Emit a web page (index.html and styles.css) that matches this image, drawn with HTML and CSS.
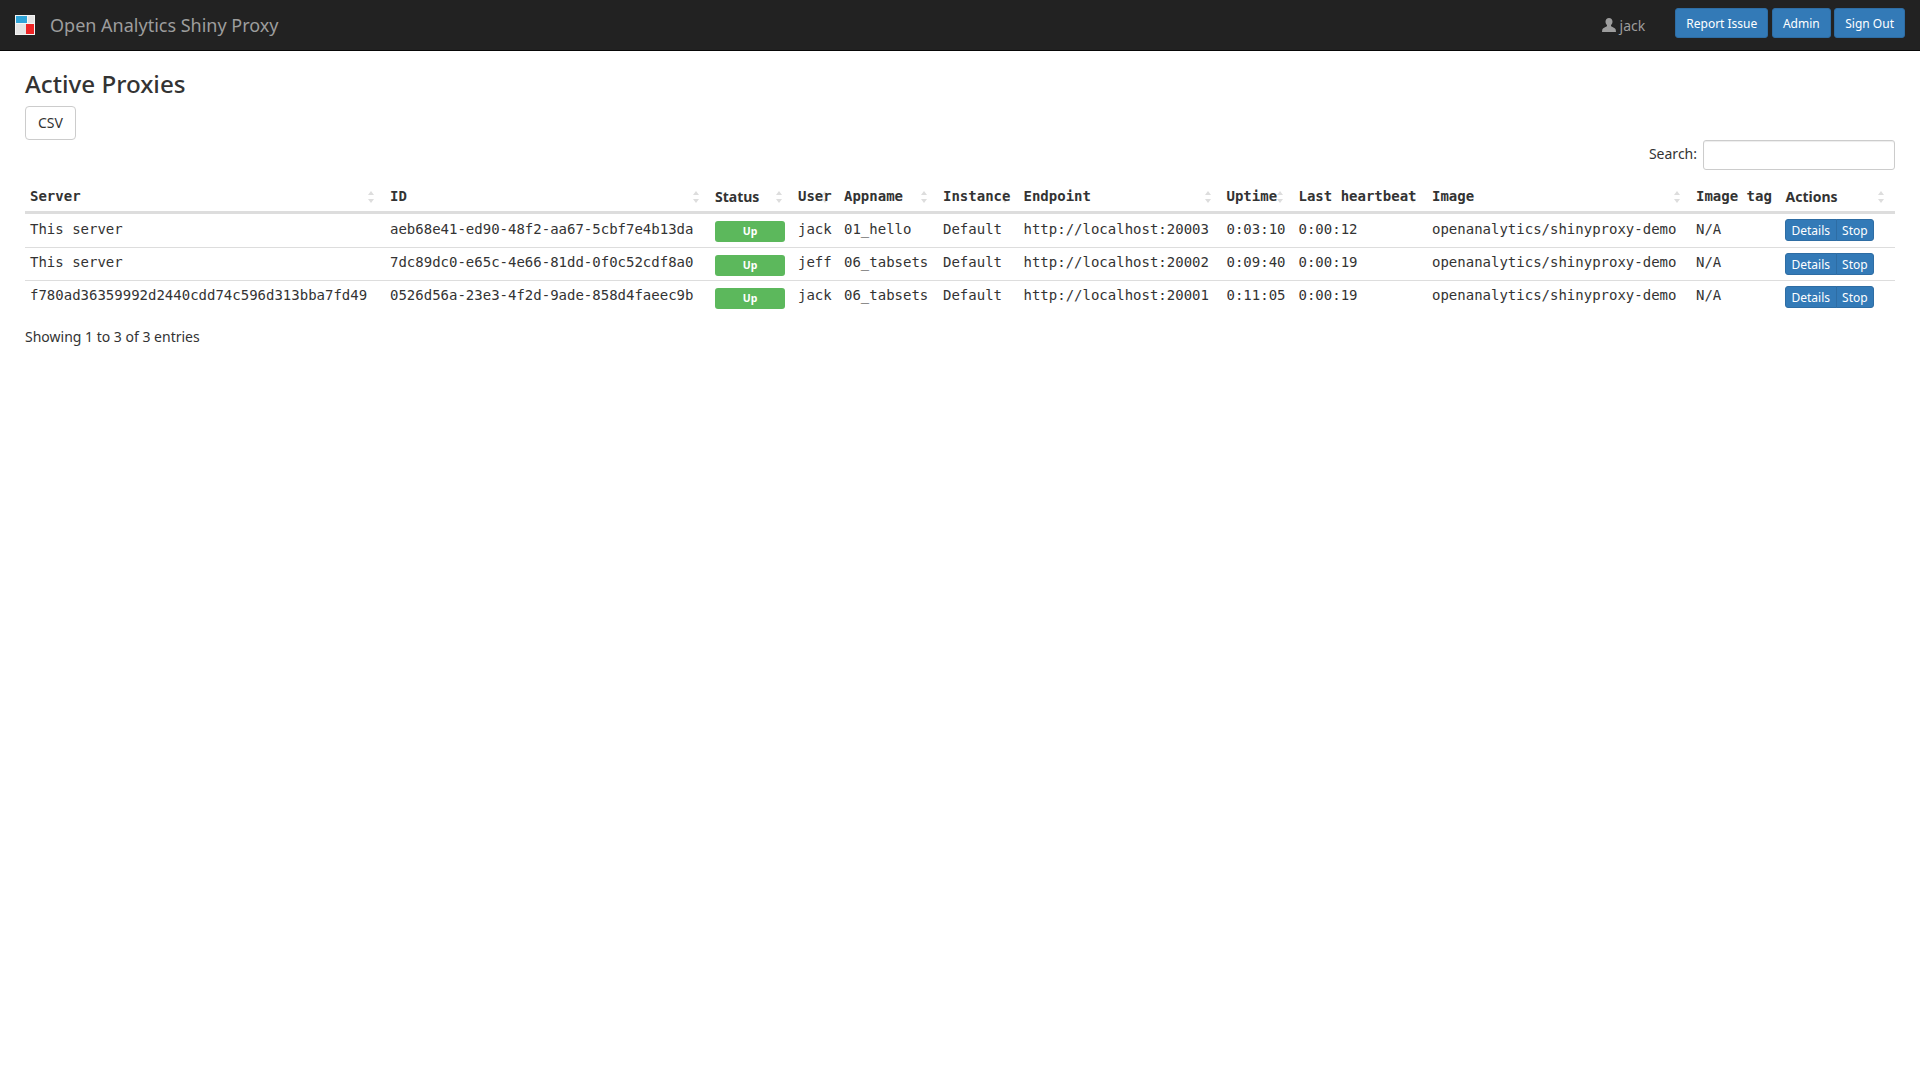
FILE: index.html
```html
<!DOCTYPE html>
<html lang="en">
<head>
<meta charset="utf-8">
<title>Open Analytics Shiny Proxy</title>
<link rel="stylesheet" href="styles.css">
</head>
<body>
<nav class="navbar">
  <div class="brand">
    <svg class="logo" width="20" height="20" viewBox="0 0 20 20" aria-hidden="true">
      <rect width="20" height="20" fill="#f4f4f4"/>
      <rect x="1" y="1" width="11" height="7" fill="#2fa4d8"/>
      <rect x="13" y="1" width="6" height="7" fill="#e4e4e4"/>
      <rect x="1" y="9" width="10" height="10" fill="#e4e4e4"/>
      <rect x="11" y="9" width="8" height="10" fill="#ee2425"/>
    </svg>
    <span class="brand-name">Open Analytics Shiny Proxy</span>
  </div>
  <div class="nav-right">
    <span class="user">
      <svg class="user-icon" width="14" height="14" viewBox="0 0 14 14" aria-hidden="true">
        <path d="M7 0C4.900 0 3.500 1.500 3.500 3.600c0 1.400.5 2.600 1.400 3.400.3.500.2 1.100-.3 1.400C3.300 9.200.7 9.700.3 11.500L0 14h14l-.3-2.500c-.4-1.800-3-2.300-4.300-3.100-.5-.3-.6-.9-.3-1.400.9-.8 1.400-2 1.400-3.400C10.500 1.500 9.100 0 7 0z" fill="#9d9d9d"/>
      </svg>
      jack
    </span>
    <div class="nav-buttons">
      <a class="btn btn-primary btn-sm">Report Issue</a>
      <a class="btn btn-primary btn-sm">Admin</a>
      <a class="btn btn-primary btn-sm">Sign Out</a>
    </div>
  </div>
</nav>
<main class="content">
  <h2 class="title">Active Proxies</h2>
  <a class="btn btn-default">CSV</a>
  <div class="filter">
    <label class="filter-label" for="search">Search:</label>
    <input class="filter-input" id="search" type="search">
  </div>
  <table class="proxies">
    <colgroup>
      <col class="c-server"><col class="c-id"><col class="c-status"><col class="c-user"><col class="c-app"><col class="c-inst"><col class="c-end"><col class="c-up"><col class="c-beat"><col class="c-img"><col class="c-tag"><col class="c-act">
    </colgroup>
    <thead>
      <tr>
        <th class="sort">Server</th>
        <th class="sort">ID</th>
        <th class="sort sans">Status</th>
        <th class="sort">User</th>
        <th class="sort">Appname</th>
        <th class="sort">Instance</th>
        <th class="sort">Endpoint</th>
        <th class="sort">Uptime</th>
        <th class="sort">Last heartbeat</th>
        <th class="sort">Image</th>
        <th class="sort">Image tag</th>
        <th class="sort sans">Actions</th>
      </tr>
    </thead>
    <tbody>
      <tr>
        <td>This server</td>
        <td>aeb68e41-ed90-48f2-aa67-5cbf7e4b13da</td>
        <td class="cell-widget"><span class="label">Up</span></td>
        <td>jack</td>
        <td>01_hello</td>
        <td>Default</td>
        <td>http://localhost:20003</td>
        <td>0:03:10</td>
        <td>0:00:12</td>
        <td>openanalytics/shinyproxy-demo</td>
        <td>N/A</td>
        <td class="cell-widget"><div class="btn-group"><a class="btn-xs">Details</a><a class="btn-xs">Stop</a></div></td>
      </tr>
      <tr>
        <td>This server</td>
        <td>7dc89dc0-e65c-4e66-81dd-0f0c52cdf8a0</td>
        <td class="cell-widget"><span class="label">Up</span></td>
        <td>jeff</td>
        <td>06_tabsets</td>
        <td>Default</td>
        <td>http://localhost:20002</td>
        <td>0:09:40</td>
        <td>0:00:19</td>
        <td>openanalytics/shinyproxy-demo</td>
        <td>N/A</td>
        <td class="cell-widget"><div class="btn-group"><a class="btn-xs">Details</a><a class="btn-xs">Stop</a></div></td>
      </tr>
      <tr>
        <td>f780ad36359992d2440cdd74c596d313bba7fd49</td>
        <td>0526d56a-23e3-4f2d-9ade-858d4faeec9b</td>
        <td class="cell-widget"><span class="label">Up</span></td>
        <td>jack</td>
        <td>06_tabsets</td>
        <td>Default</td>
        <td>http://localhost:20001</td>
        <td>0:11:05</td>
        <td>0:00:19</td>
        <td>openanalytics/shinyproxy-demo</td>
        <td>N/A</td>
        <td class="cell-widget"><div class="btn-group"><a class="btn-xs">Details</a><a class="btn-xs">Stop</a></div></td>
      </tr>
    </tbody>
  </table>
  <div class="info">Showing 1 to 3 of 3 entries</div>
</main>
</body>
</html>
```
FILE: styles.css
```css
* { box-sizing: border-box; }
html, body { margin: 0; padding: 0; }
body {
  background: #fff;
  color: #333;
  font-family: "Noto Sans", sans-serif;
  font-size: 14px;
  line-height: 20px;
}
.navbar {
  display: flex;
  justify-content: space-between;
  height: 51px;
  background: #222;
  border-bottom: 1px solid #080808;
  padding: 0 15px;
}
.brand { display: flex; align-items: center; gap: 15px; }
.logo { display: block; }
.brand-name { color: #9d9d9d; font-size: 18px; }
.nav-right { display: flex; align-items: flex-start; }
.user {
  display: flex;
  align-items: center;
  gap: 4px;
  color: #9d9d9d;
  height: 50px;
  padding-top: 2px;
  margin-right: 30px;
}
.user-icon { margin-top: -2px; }
.nav-buttons { display: flex; gap: 3.6px; padding-top: 8px; }
.btn {
  display: inline-block;
  border: 1px solid transparent;
  border-radius: 4px;
  text-align: center;
  white-space: nowrap;
}
.btn-primary { background: #337ab7; border-color: #2e6da4; color: #fff; }
.btn-sm { font-size: 12px; line-height: 18px; padding: 6px 10px 4px; border-radius: 3px; }
.btn-default { background: #fff; border-color: #ccc; color: #333; padding: 6px 12px; }
.content { padding: 0 25px; }
.title {
  font-size: 24.2px;
  font-weight: 500;
  line-height: 26px;
  margin: 20px 0 9px;
}
.filter {
  display: flex;
  justify-content: flex-end;
  align-items: center;
  gap: 6px;
}
.filter-label { padding-bottom: 2px; }
.filter-input {
  width: 192px;
  height: 30px;
  border: 1px solid #ccc;
  border-radius: 3px;
  padding: 5px 10px;
  box-shadow: inset 0 1px 1px rgba(0,0,0,.075);
  font: inherit;
}
.proxies {
  width: 1870px;
  table-layout: fixed;
  border-collapse: separate;
  border-spacing: 0;
  margin-top: 6px;
  font-family: "DejaVu Sans Mono", monospace;
}
.c-server { width: 360px; }
.c-id { width: 325px; }
.c-status { width: 83px; }
.c-user { width: 46px; }
.c-app { width: 99px; }
.c-inst { width: 80.5px; }
.c-end { width: 203px; }
.c-up { width: 72px; }
.c-beat { width: 133.5px; }
.c-img { width: 264px; }
.c-tag { width: 89.500px; }
.c-act { width: 114.500px; }
.proxies th {
  position: relative;
  text-align: left;
  font-weight: 700;
  height: 38px;
  padding: 0 0 5px 5px;
  border-bottom: 3px solid #ddd;
  white-space: nowrap;
  vertical-align: bottom;
}
.proxies th.sans { font-family: "Noto Sans", sans-serif; padding-bottom: 4px; }
.sort::before, .sort::after {
  content: "";
  position: absolute;
  right: 11px;
  z-index: -1;
  border-left: 3px solid transparent;
  border-right: 3px solid transparent;
}
.sort::before { top: 15px; border-bottom: 4px solid #ddd; }
.sort::after { top: 23px; border-top: 4px solid #ddd; }
.proxies td {
  height: 33px;
  padding: 0 0 4px 5px;
  border-bottom: 1px solid #ddd;
  white-space: nowrap;
  vertical-align: middle;
}
.proxies tbody tr:first-child td { height: 34px; padding-bottom: 3px; }
.proxies tbody tr:last-child td { border-bottom: 0; height: 32px; }
.proxies td.cell-widget {
  padding: 5px 0 0 5px;
  vertical-align: top;
  font-family: "Noto Sans", sans-serif;
}
.label {
  display: block;
  width: 70px;
  height: 21px;
  margin-top: 2px;
  background: #5cb85c;
  color: #fff;
  border-radius: 3px;
  font-size: 10.5px;
  font-weight: 700;
  line-height: 20px;
  text-align: center;
}
.btn-group { display: flex; margin-left: -0.5px; }
.btn-xs {
  background: #337ab7;
  border: 1px solid #2e6da4;
  color: #fff;
  font-size: 12px;
  line-height: 18px;
  padding: 2px 5.5px 0;
  height: 22px;
}
.btn-xs:first-child { border-radius: 3px 0 0 3px; }
.btn-xs:last-child { border-radius: 0 3px 3px 0; margin-left: -1px; }
.info { margin-top: 14px; }
```
